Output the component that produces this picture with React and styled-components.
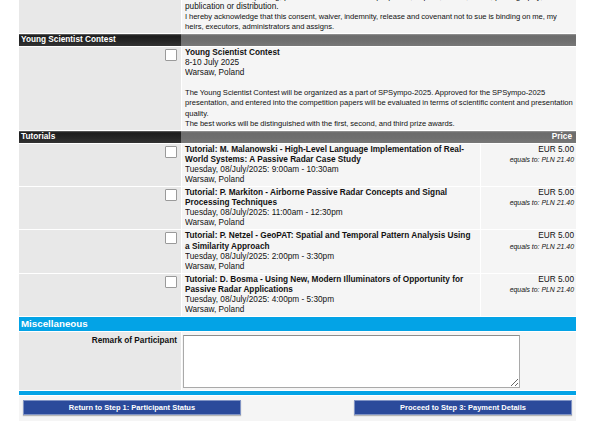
import React from "react";
import styled, { createGlobalStyle } from "styled-components";

const GlobalStyle = createGlobalStyle`
  html, body { margin: 0; padding: 0; background: #ffffff; }
  body { font-family: "Liberation Sans", Arial, sans-serif; color: #111; overflow: hidden; }
  * { box-sizing: border-box; }
`;

const Page = styled.div`
  padding-left: 19px;
  margin-top: -9.4px;
`;

const Table = styled.div`
  width: 557px;
  display: flex;
  flex-direction: column;
  gap: 1px;
  background: #ffffff;
  font-size: 8.25px;
  line-height: 10.1px;
`;

const Row = styled.div`
  display: grid;
  grid-template-columns: ${(p) => (p.$price ? "162px 1fr 95px" : "162px 1fr")};
  column-gap: 1px;
`;

const LabelCell = styled.div`
  background: #e8e8e8;
  display: flex;
  justify-content: flex-end;
  align-items: flex-start;
  padding: ${(p) => (p.$label ? "4px 4px 0 0" : "1px 4px 0 0")};
  font-weight: bold;
`;

const ContentCell = styled.div`
  background: #f5f5f5;
  padding: ${(p) => (p.$wide ? "1px 1px 1px 3px" : "1px 3px")};
`;

const PriceCell = styled.div`
  background: #f5f5f5;
  padding: 1px 2px;
  text-align: right;
`;

const FieldCell = styled.div`
  background: #f5f5f5;
  padding: 3px 0 2px 1px;
  display: flex;
`;

const Checkbox = styled.input.attrs({ type: "checkbox" })`
  appearance: none;
  -webkit-appearance: none;
  margin: 1px 0 0 0;
  width: 12px;
  height: 12px;
  background: #ffffff;
  border: 1px solid #9a9a9a;
  border-radius: 1px;
`;

const Title = styled.div`
  font-weight: bold;
`;

const Line = styled.div`
  white-space: ${(p) => (p.$nowrap ? "nowrap" : "normal")};
  overflow: hidden;
`;

const Desc = styled.div`
  font-size: 7.6px;
  word-spacing: -0.3px;
`;

const Spacer = styled.div`
  height: 10.1px;
`;

const Amount = styled.div``;

const Equals = styled.div`
  font-style: italic;
  font-size: 6.9px;
  line-height: 10px;
`;

const HeaderRow = styled.div`
  display: grid;
  grid-template-columns: 162px 1fr;
  height: 12px;
  line-height: 12px;
  color: #ffffff;
  font-weight: bold;
`;

const HeaderLeft = styled.div`
  background: linear-gradient(to bottom, #6a6a6a 0, #1c1c1c 14%, #262626 60%, #333 100%);
  padding-left: 2px;
`;

const HeaderRight = styled.div`
  background: linear-gradient(to bottom, #9a9a9a 0, #6c6c6c 14%, #6f6f6f 60%, #787878 100%);
  text-align: right;
  padding-right: 4px;
`;

const BlueHeader = styled.div`
  background: #03a3e6;
  color: #ffffff;
  font-weight: bold;
  font-size: 9.75px;
  height: 14px;
  line-height: 14px;
  padding-left: 2px;
`;

const BlueBar = styled.div`
  background: #03a3e6;
  height: 4px;
`;

const Remark = styled.textarea`
  width: 337px;
  height: 53px;
  border: 1px solid #a9a9a9;
  border-top-color: #8d8d8d;
  background: #ffffff;
  margin: 0;
  padding: 2px;
  font-family: "Liberation Sans", Arial, sans-serif;
  font-size: 8px;
`;

const ButtonBar = styled.div`
  display: flex;
  justify-content: space-between;
  padding: 4px 4px 12px;
  background: #f5f5f5;
`;

const Button = styled.button`
  width: 218px;
  height: 15px;
  padding: 0;
  background: #2b4a9b;
  color: #ffffff;
  font-family: "Liberation Sans", Arial, sans-serif;
  font-weight: bold;
  font-size: 7.5px;
  border: 1px solid #8093c4;
  box-shadow: 0 1px 1px rgba(0, 0, 0, 0.25);
`;

const tutorials = [
  {
    title: "Tutorial: M. Malanowski - High-Level Language Implementation of Real-World Systems: A Passive Radar Case Study",
    time: "Tuesday, 08/July/2025: 9:00am - 10:30am",
  },
  {
    title: "Tutorial: P. Markiton - Airborne Passive Radar Concepts and Signal Processing Techniques",
    time: "Tuesday, 08/July/2025: 11:00am - 12:30pm",
  },
  {
    title: "Tutorial: P. Netzel - GeoPAT: Spatial and Temporal Pattern Analysis Using a Similarity Approach",
    time: "Tuesday, 08/July/2025: 2:00pm - 3:30pm",
  },
  {
    title: "Tutorial: D. Bosma - Using New, Modern Illuminators of Opportunity for Passive Radar Applications",
    time: "Tuesday, 08/July/2025: 4:00pm - 5:30pm",
  },
];

export default function App() {
  return (
    <>
      <GlobalStyle />
      <Page>
        <Table>
          <Row>
            <LabelCell />
            <ContentCell $wide>
              <Line $nowrap>
                and their use for reporting, promotional and archival purposes, in print, online, video, photography,
              </Line>
              <Line>publication or distribution.</Line>
              <Desc>
                I hereby acknowledge that this consent, waiver, indemnity, release and covenant not to sue is binding on me, my heirs, executors, administrators and assigns.
              </Desc>
            </ContentCell>
          </Row>

          <HeaderRow>
            <HeaderLeft>Young Scientist Contest</HeaderLeft>
            <HeaderRight />
          </HeaderRow>

          <Row>
            <LabelCell>
              <Checkbox />
            </LabelCell>
            <ContentCell $wide>
              <Title>Young Scientist Contest</Title>
              <Line>8-10 July 2025</Line>
              <Line>Warsaw, Poland</Line>
              <Spacer />
              <Desc>
                The Young Scientist Contest will be organized as a part of SPSympo-2025. Approved for the SPSympo-2025 presentation, and entered into the competition papers will be evaluated in terms of scientific content and presentation quality.
              </Desc>
              <Desc>The best works will be distinguished with the first, second, and third prize awards.</Desc>
            </ContentCell>
          </Row>

          <HeaderRow>
            <HeaderLeft>Tutorials</HeaderLeft>
            <HeaderRight>Price</HeaderRight>
          </HeaderRow>

          {tutorials.map((t) => (
            <Row $price key={t.title}>
              <LabelCell>
                <Checkbox />
              </LabelCell>
              <ContentCell>
                <Title>{t.title}</Title>
                <Line>{t.time}</Line>
                <Line>Warsaw, Poland</Line>
              </ContentCell>
              <PriceCell>
                <Amount>EUR 5.00</Amount>
                <Equals>equals to: PLN 21.40</Equals>
              </PriceCell>
            </Row>
          ))}

          <BlueHeader>Miscellaneous</BlueHeader>

          <Row>
            <LabelCell $label>Remark of Participant</LabelCell>
            <FieldCell>
              <Remark />
            </FieldCell>
          </Row>

          <BlueBar />

          <ButtonBar>
            <Button>Return to Step 1: Participant Status</Button>
            <Button>Proceed to Step 3: Payment Details</Button>
          </ButtonBar>
        </Table>
      </Page>
    </>
  );
}
